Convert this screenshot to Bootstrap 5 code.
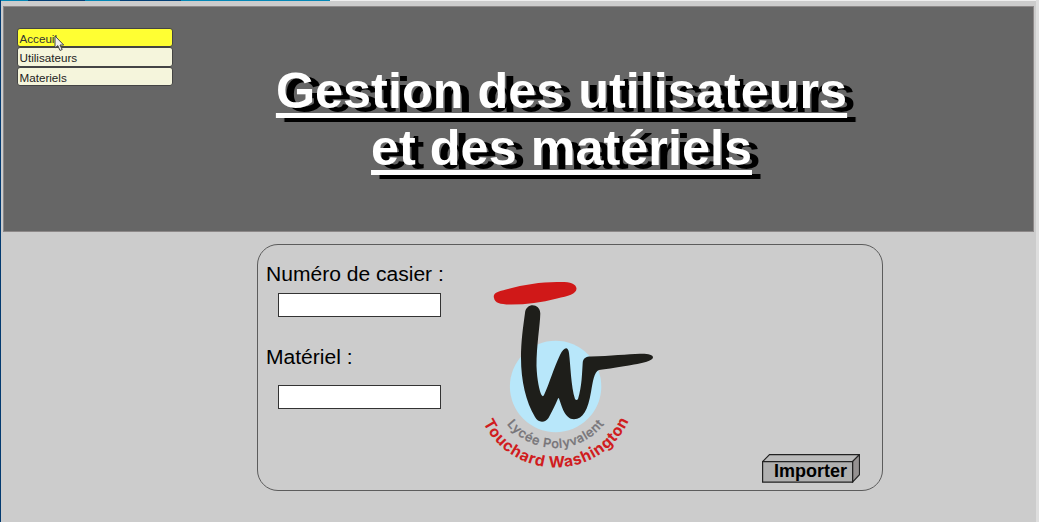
<!DOCTYPE html>
<html lang="fr">
<head>
<meta charset="utf-8">
<meta name="viewport" content="width=device-width, initial-scale=1">
<title>Gestion des utilisateurs et des matériels</title>
<link href="https://cdn.jsdelivr.net/npm/bootstrap@5.3.0/dist/css/bootstrap.min.css" rel="stylesheet">
<style>
body{background:#ccc;color:#000;font-family:"Liberation Sans",Arial,sans-serif;height:522px;border-left:1px solid #033a70;border-right:3px solid #dedede;overflow:hidden}
.top-line{height:1px;margin-left:-1px;background:linear-gradient(90deg,#0487b5 0 28px,#033f75 28px 85px,#0487b5 85px 120px,#033f75 120px 181px,#0487b5 181px 330px,#eee 330px)}
.banner{margin:5px 2px 0;height:226px;background:#666;border:1px solid #8c8888}
.menu{width:156px;margin:21px 0 0 13px}
.menu .list-group-item{height:19.4px;padding:0 2px 0 1.5px;font-size:11.65px;line-height:19.4px;color:#222;background:#f5f5dc;border:1px solid #444;border-radius:3px;margin:0}
.menu .list-group-item.active{background:#ff3;color:#333}
.pointer{left:37px;top:7px;z-index:3}
.title{font-size:50.4px;font-weight:700;line-height:57.3px;color:#fff;text-shadow:8.5px 4px 0 #000;text-decoration:underline;text-decoration-thickness:5px;text-underline-offset:5px;margin:55px 0 0 100.5px;width:576px;white-space:nowrap}
.panel{width:626px;height:247px;margin:12px 0 0 255.5px;border:1.5px solid #5c5c5c;border-radius:21px}
.fields{width:228px;padding:16px 0 0 8.5px}
.fields label{font-size:21.05px;line-height:26px;height:26px;white-space:nowrap}
.fields .form-control{width:163px;height:24px;margin-left:12px;border:1px solid #333;border-radius:0;padding:0 4px;background:#fff}
.import-btn{width:98px;height:29px;border:0;background:none;padding:5px 0 0 12.5px;font-size:18px;font-weight:700;line-height:20px;color:#000;text-align:left;margin:0 22px 7px 0}
.logo{margin:29px 0 0 -.5px}
</style>
</head>
<body>
<div class="top-line"></div>
<header class="banner d-flex align-items-start">
  <nav class="menu list-group position-relative flex-shrink-0">
    <a class="list-group-item active">Acceuil</a>
    <a class="list-group-item">Utilisateurs</a>
    <a class="list-group-item">Materiels</a>
    <svg class="pointer position-absolute" width="12" height="17" viewBox="0 0 12 17"><path d="M1 1v12l2.8-2.4L6 15.5l2.2-1L6 10h3.7z" fill="#eee" stroke="#444" stroke-width="1"/></svg>
  </nav>
  <h1 class="title text-center">Gestion des utilisateurs<br>et des matériels</h1>
</header>
<main class="panel d-flex">
  <form class="fields d-flex flex-column flex-shrink-0">
    <label for="casier">Numéro de casier :</label>
    <input id="casier" class="form-control mb-4" style="margin-top:5.5px">
    <label for="materiel" style="margin-top:3.5px">Matériel :</label>
    <input id="materiel" class="form-control" style="margin-top:15px">
  </form>
  <svg class="logo flex-shrink-0 overflow-visible" width="175" height="200" viewBox="485 274 175 200" role="img" aria-label="Lycée Polyvalent Touchard Washington">
    <defs>
      <path id="arcIn" d="M494 386.5a61.5 61.5 0 0 0 123 0"/>
      <path id="arcOut" d="M474.500 386.5a81 81 0 0 0 162 0"/>
    </defs>
    <circle cx="555.6" cy="386.5" r="45.7" fill="#b8e7fa"/>
    <path fill="#d01818" d="M494 298C492.5 293 498 291.5 506 289.5C522 285 540 282 557 282C569 281.5 576 283 576.5 288.5C576.5 294 568 296 557 298.5C541 302.5 527 304.5 511 304.5C500 304.5 495 303 494 298Z"/>
    <path fill="#1e1e1a" d="M525 313C526 302.5 540 303 540.3 313.5C540 326 536.5 345 536.5 366C537 380 539.5 391 541.5 395C542.5 396.5 543.3 396.5 544 395C550 382 553 370 560 355C564 347 568 346 569 353C570.5 364 571 387 575 399Q576.5 401 578 399C582 386 582 373 582.7 363C583 358 586 356.5 591 356.5C610 356 628 354 640 353.7C648 353.5 653 354.5 653 357.5C652.5 361 643 363 634 364.5C620 367 608 369 599 370C594 372 593 381 591 392C588 410 583 419 574 419.3C565 419 562 407 559 398.5Q558.5 397.5 558 398.5C555 406 551 413 548.5 418Q546 421.5 542 421.7Q537.5 421.5 535 417C526 402 521 381 521 358C521 341 523 328 525 313Z"/>
    <g font-family="Inter, sans-serif">
      <text font-size="12.6" font-weight="500" fill="#777579" stroke="#777579" stroke-width=".3" textLength="112" lengthAdjust="spacing"><textPath href="#arcIn" startOffset="40.5">Lycée Polyvalent</textPath></text>
      <text font-size="15.6" font-weight="700" fill="#d01c20" textLength="181" lengthAdjust="spacing"><textPath href="#arcOut" startOffset="37.5">Touchard Washington</textPath></text>
    </g>
  </svg>
  <button type="button" class="import-btn position-relative ms-auto align-self-end">
    <svg class="position-absolute top-0 start-0" width="98" height="29" viewBox="0 0 98 29" stroke="#222" stroke-width="1.2"><path d="M.6 7.6L7.5.6h90l-7 7z" fill="#bbb"/><path d="M90.5 7.6l7-7v20l-7 7.5z" fill="#959191"/><path d="M.6 7.6h90v20.6H.6z" fill="#b0b0b0"/></svg>
    <span class="position-relative">Importer</span>
  </button>
</main>
<script src="https://cdn.jsdelivr.net/npm/bootstrap@5.3.0/dist/js/bootstrap.bundle.min.js"></script>
</body>
</html>
